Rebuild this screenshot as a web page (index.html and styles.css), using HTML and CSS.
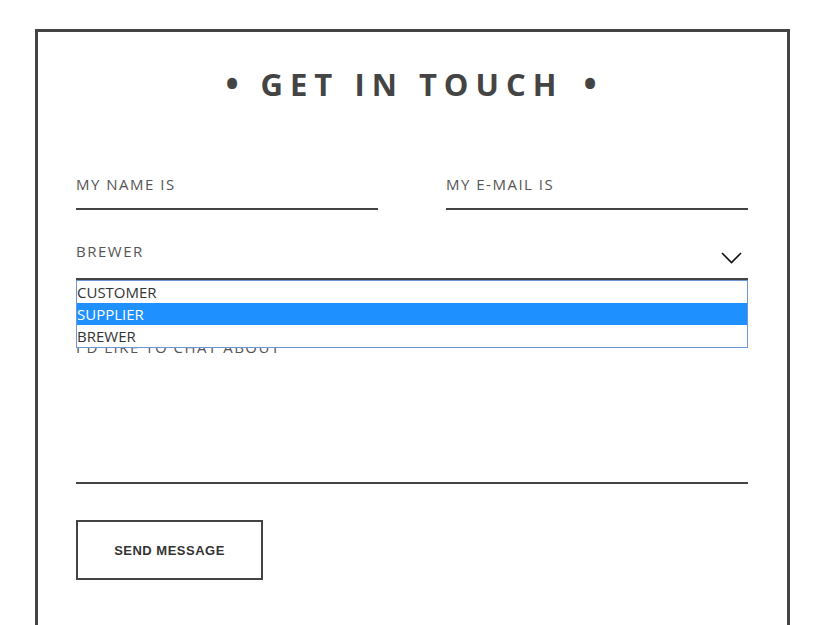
FILE: index.html
```html
<!DOCTYPE html>
<html lang="en">
<head>
<meta charset="utf-8">
<title>Get in touch</title>
<link rel="stylesheet" href="styles.css">
</head>
<body>
<section class="card">
  <h1 class="title"><span class="dot">•</span>GET IN TOUCH<span class="dot">•</span></h1>
  <form class="form">
    <div class="row two">
      <label class="field"><span class="label">MY NAME IS</span></label>
      <label class="field"><span class="label">MY E-MAIL IS</span></label>
    </div>
    <div class="select-wrap">
      <div class="field select">
        <span class="label">BREWER</span>
        <svg class="chev" width="21" height="12" viewBox="0 0 21 12"><path d="M1 1 L10.5 10.5 L20 1" fill="none" stroke="#111" stroke-width="1.6"/></svg>
      </div>
      <ul class="options">
        <li>CUSTOMER</li>
        <li class="active">SUPPLIER</li>
        <li>BREWER</li>
      </ul>
    </div>
    <div class="field area"><span class="label">I'D LIKE TO CHAT ABOUT</span></div>
    <button type="button" class="send">SEND MESSAGE</button>
  </form>
</section>
</body>
</html>
```
FILE: styles.css
```css
html, body { margin: 0; padding: 0; background: #fff; }
body { font-family: "Open Sans", "Liberation Sans", sans-serif; color: #444; }
.card {
  margin: 29px 0 0 35px;
  width: 755px;
  height: 640px;
  box-sizing: border-box;
  border: 3px solid #444;
  border-bottom: none;
  padding: 0 39px 0 38px;
}
.title {
  margin: 0;
  padding-top: 29px;
  text-align: center;
  font-size: 31px;
  font-weight: 700;
  letter-spacing: 7px;
  line-height: 46px;
  color: #444;
}
.title .dot { font-size: 35px; line-height: 0; margin: 0 22px 0 20px; vertical-align: -1px; letter-spacing: 0; }
.form { display: flex; flex-direction: column; margin-top: 67px; }
.row.two { display: grid; grid-template-columns: 1fr 1fr; column-gap: 68px; }
.field { display: flex; align-items: flex-start; border-bottom: 2px solid #444; height: 34px; }
.label { font-size: 15px; font-weight: 400; letter-spacing: 1.5px; line-height: 20px; color: #555; }
.select-wrap { position: relative; margin-top: 31px; }
.select { height: 37px; justify-content: space-between; align-items: flex-start; }
.chev { margin: 11px 6px 0 0; }
.options {
  position: absolute;
  left: 0; right: 0; top: 39px;
  margin: 0; padding: 0;
  list-style: none;
  border: 1px solid #6f94d8;
  background: #fff;
}
.options li { height: 22px; line-height: 22px; font-size: 15px; color: #333; padding-left: 0; }
.options li.active { background: #1e90ff; color: #fff; }
.area { margin-top: 57px; height: 145px; }
.send {
  margin-top: 36px;
  align-self: flex-start;
  width: 187px; height: 60px;
  border: 2px solid #444;
  background: #fff;
  font-family: "Liberation Sans", Arial, sans-serif;
  font-weight: 700;
  font-size: 13px;
  letter-spacing: 0.5px;
  color: #333;
}
```
